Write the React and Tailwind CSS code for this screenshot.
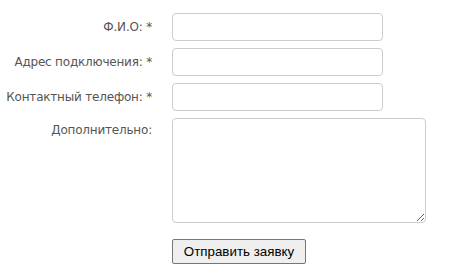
export default function App() {
  const fields = [
    { label: "Ф.И.О: *", name: "fio" },
    { label: "Адрес подключения: *", name: "address" },
    { label: "Контактный телефон: *", name: "phone" },
  ];

  return (
    <div className="w-[450px] h-[274px] bg-white pt-[13px]">
      <form
        className="grid grid-cols-[152px_auto] gap-x-[20px] gap-y-[7px] items-center"
        onSubmit={(e) => e.preventDefault()}
      >
        {fields.map((f) => (
          <div key={f.name} className="contents">
            <label
              htmlFor={f.name}
              className="text-right whitespace-nowrap text-[12px] tracking-[-0.2px] text-[#555] font-['DejaVu_Sans',sans-serif] leading-none"
            >
              {f.label}
            </label>
            <input
              id={f.name}
              type="text"
              className="w-[211px] h-[28px] border border-[#cccccc] rounded-[4px] bg-white outline-none"
            />
          </div>
        ))}

        <label
          htmlFor="extra"
          className="self-start pt-[6px] text-right whitespace-nowrap text-[12px] tracking-[-0.2px] text-[#555] font-['DejaVu_Sans',sans-serif] leading-none"
        >
          Дополнительно:
        </label>
        <textarea
          id="extra"
          className="w-[254px] h-[105px] border border-[#cccccc] rounded-[4px] bg-white outline-none resize"
        />

        <div />
        <button
          type="submit"
          className="mt-[9px] justify-self-start w-[134px] h-[25px] bg-[#efefef] border border-[#767676] rounded-[2px] text-[13.33px] text-black font-['Liberation_Sans',Arial,sans-serif]"
        >
          Отправить заявку
        </button>
      </form>
    </div>
  );
}
